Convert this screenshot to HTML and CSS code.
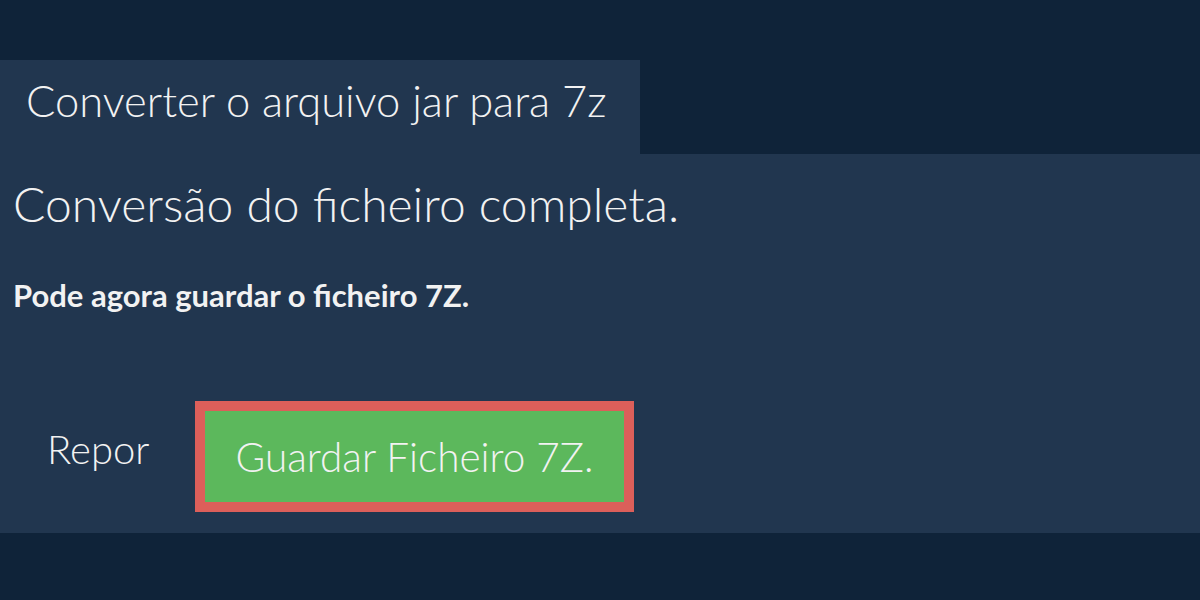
FILE: index.html
```html
<!DOCTYPE html>
<html lang="pt">
<head>
<meta charset="utf-8">
<title>Converter o arquivo jar para 7z</title>
<link rel="stylesheet" href="styles.css">
</head>
<body>
<div class="page">
  <div class="tab">Converter o arquivo jar para 7z</div>
  <div class="panel">
    <h1 class="title">Conversão do ficheiro completa.</h1>
    <p class="note">Pode agora guardar o ficheiro 7Z.</p>
    <div class="actions">
      <a class="reset">Repor</a>
      <a class="save">Guardar Ficheiro 7Z.</a>
    </div>
  </div>
</div>
</body>
</html>
```
FILE: styles.css
```css
html, body {
  margin: 0;
  padding: 0;
  background: #0f2339;
  font-family: Lato, "Open Sans", sans-serif;
  color: #f2f2f2;
}
.page {
  padding-top: 60px;
}
.tab {
  width: 640px;
  height: 94px;
  box-sizing: border-box;
  background: #21364f;
  padding-left: 26px;
  font-size: 43.5px;
  font-weight: 300;
  line-height: 80px;
  white-space: nowrap;
}
.panel {
  background: #21364f;
  height: 379px;
  box-sizing: border-box;
  padding: 21px 13px 0;
}
.title {
  margin: 0;
  font-size: 48px;
  font-weight: 300;
  line-height: 58px;
  white-space: nowrap;
}
.note {
  margin: 43px 0 0;
  font-size: 31px;
  font-weight: 700;
  line-height: 38px;
  white-space: nowrap;
}
.actions {
  display: flex;
  align-items: flex-start;
  margin-top: 87px;
}
.reset {
  box-sizing: border-box;
  width: 182px;
  padding-left: 34px;
  margin-top: 24px;
  font-size: 40px;
  font-weight: 300;
  line-height: 48px;
}
.save {
  display: block;
  background: #5cb85c;
  border: 10px solid #dc5f5a;
  width: 439px;
  height: 111px;
  box-sizing: border-box;
  text-align: center;
  font-size: 40.5px;
  font-weight: 300;
  line-height: 91px;
  white-space: nowrap;
}
```
